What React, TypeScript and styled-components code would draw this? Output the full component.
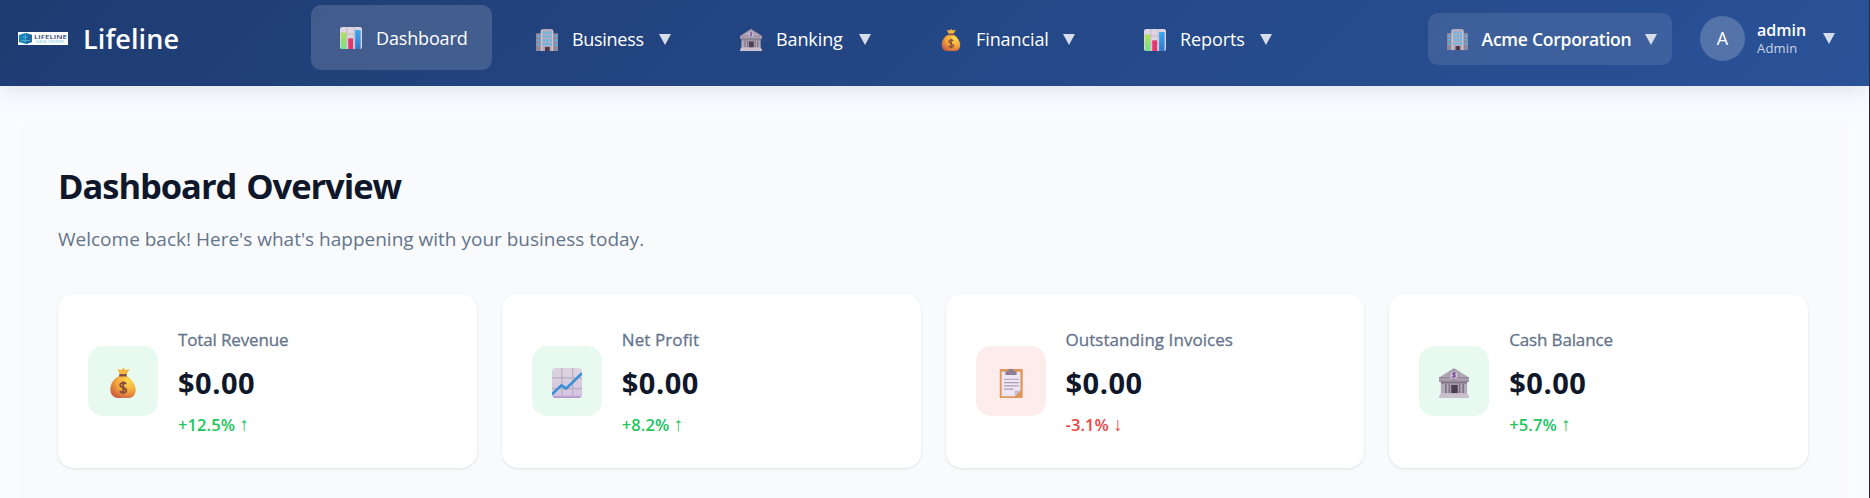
import React from "react";
import styled, { createGlobalStyle } from "styled-components";

const Global = createGlobalStyle`
  * { box-sizing: border-box; }
  body { margin: 0; background: #f8fbff; font-family: "Open Sans", "Noto Sans", sans-serif; overflow: hidden; }
`;

const Page = styled.div`
  height: 498px;
  border-right: 1px solid #2b2d33;
  display: flex;
  flex-direction: column;
  background: #f8fbff;
`;
const Header = styled.header`
  flex: none;
  height: 86px;
  padding: 0 34px 9px 18px;
  display: flex;
  align-items: center;
  color: #fff;
  background: linear-gradient(135deg, #1e3c72 0%, #2a5298 100%);
  box-shadow: 0 4px 20px rgba(0, 0, 0, 0.1);
  z-index: 1;
`;
const Brand = styled.div`
  width: 293px;
  display: flex;
  align-items: center;
  gap: 15px;
`;
const Text = styled.span<{ $size: number; $weight?: number; $track?: number }>`
  font-size: ${(p) => p.$size}px;
  font-weight: ${(p) => p.$weight ?? 400};
  letter-spacing: ${(p) => p.$track ?? 0}px;
  line-height: 1.36;
  white-space: nowrap;
`;
const BrandName = styled(Text)`
  padding-top: 2px;
`;
const Nav = styled.nav`
  display: flex;
  align-items: center;
  flex: 1;
`;
const NavItem = styled.div<{ $width: number; $active?: boolean }>`
  width: ${(p) => p.$width}px;
  height: 65px;
  padding-left: ${(p) => (p.$active ? 29 : 0)}px;
  padding-top: ${(p) => (p.$active ? 1 : 2)}px;
  border-radius: 10px;
  display: flex;
  align-items: center;
  background: ${(p) => (p.$active ? "rgba(255,255,255,0.15)" : "transparent")};
  margin-right: ${(p) => (p.$active ? 44 : 0)}px;
  margin-bottom: ${(p) => (p.$active ? 2 : 0)}px;
`;
const NavLabel = styled(Text)<{ $box: number }>`
  width: ${(p) => p.$box}px;
  margin-left: 14px;
`;
const Caret = styled.i`
  width: 12px;
  height: 11px;
  flex: none;
  background: #d5dcea;
  clip-path: polygon(0 0, 100% 0, 50% 100%);
`;
const Company = styled.div`
  width: 244px;
  height: 52px;
  padding: 2px 15px 0 19px;
  margin-right: 28px;
  border-radius: 10px;
  background: rgba(255, 255, 255, 0.1);
  display: flex;
  align-items: center;
  justify-content: space-between;
`;
const Avatar = styled.div`
  width: 45px;
  height: 45px;
  border-radius: 50%;
  background: rgba(255, 255, 255, 0.2);
  display: grid;
  place-items: center;
`;
const User = styled.div`
  width: 78px;
  padding-left: 12px;
  display: flex;
  flex-direction: column;
`;
const Role = styled(Text)`
  color: #cbd5e7;
  line-height: 16px;
`;
const UserName = styled(Text)`
  line-height: 19px;
`;
const Main = styled.main`
  flex: 1;
  margin: 40px 21px 0 18px;
  padding: 36px 40px 0;
  background: #f9fafc;
`;
const Title = styled.h1`
  margin: 0;
  font-size: 34.5px;
  line-height: 48px;
  font-weight: 700;
  letter-spacing: -1.05px;
  word-spacing: 2px;
  color: #0f172a;
`;
const Subtitle = styled.p`
  margin: 15px 0 0;
  font-size: 19px;
  line-height: 28px;
  color: #64748b;
`;
const Cards = styled.section`
  margin-top: 41px;
  display: grid;
  grid-template-columns: repeat(4, 1fr);
  gap: 25px;
`;
const Card = styled.article`
  height: 174px;
  padding-left: 30px;
  border-radius: 16px;
  background: #fff;
  box-shadow: 0 1px 3px rgba(0, 0, 0, 0.1);
  display: flex;
  align-items: center;
  gap: 20px;
`;
const Tile = styled.div<{ $down?: boolean }>`
  width: 70px;
  height: 70px;
  border-radius: 15px;
  background: ${(p) => (p.$down ? "#fdecec" : "#e8f9ef")};
  display: grid;
  place-items: center;
  padding-top: 3px;
`;
const Stat = styled.div`
  display: flex;
  flex-direction: column;
  padding-top: 2px;
`;
const StatLabel = styled(Text)`
  color: #64748b;
  line-height: 24px;
  -webkit-text-stroke: 0.3px #64748b;
`;
const Value = styled(Text)`
  color: #0f172a;
  line-height: 40px;
  margin: 11px 0 10px;
`;
const Change = styled(Text)<{ $down?: boolean }>`
  color: ${(p) => (p.$down ? "#ef4444" : "#22c55e")};
  line-height: 24px;
`;
const Arrow = styled.span`
  font-size: 19px;
  font-weight: 400;
  line-height: 1;
`;

type IconName = "chart" | "building" | "bank" | "bag" | "trend" | "clipboard";

const drawings: Record<IconName, React.ReactNode> = {
  chart: (
    <>
      <rect width="32" height="32" rx="3" fill="#ddd5e2" />
      <path d="M10 0v32M20.5 0v32M0 10h32M0 21h32" stroke="#bdb4c6" strokeWidth="1.2" />
      <path d="M1.5 8h7.5v24H3q-1.5 0-1.5-2z" fill="url(#barGreen)" />
      <path d="M12 16.5h7V32h-7z" fill="#e5336c" />
      <path d="M22 4.500h8V30q0 2-2 2h-6z" fill="url(#barBlue)" />
    </>
  ),
  building: (
    <>
      <path d="M1 6h7v26H0V7zM24 6h7l1 1v25h-8z" fill="#91869a" />
      <path d="M8 1l2-1h12l3 2v30H7V2z" fill="#b5aabb" />
      <path d="M7 2l2-2v32H7zM23 0l2 2v30h-2z" fill="#d0c3d1" />
      <path d="M10 4h3v3h-3zM15 4h3v3h-3zM20 4h3v3h-3zM10 9.500h3v3h-3zM15 9.500h3v3h-3zM20 9.500h3v3h-3zM10 15h3v3h-3zM15 15h3v3h-3zM20 15h3v3h-3zM10 20.500h3v3h-3zM15 20.500h3v3h-3zM20 20.500h3v3h-3zM2 9h3v3H2zM2 15h3v3H2zM2 21h3v3H2zM28 9h3v3h-3zM28 15h3v3h-3zM28 21h3v3h-3z" fill="#3ec4fa" />
      <path d="M13 26h7v6h-7z" fill="#503849" />
    </>
  ),
  bank: (
    <>
      <path d="M2 14h28v15H2z" fill="#b3a8b8" />
      <path d="M2 15h28v1.500H2z" fill="#7c7084" />
      <path d="M6.500 17h1.600v10H6.500zM10.200 17h1.600v10h-1.600zM21.200 17h1.600v10h-1.600zM25 17h1.600v10H25z" fill="#7b6f84" />
      <path d="M13 18h7v9h-7z" fill="#4c3f50" />
      <path d="M0 10L16 0l16 10v4H0z" fill="#b0a6b6" />
      <path d="M0 10.500h11M21 10.500h11M0 14h32" fill="none" stroke="#8c8194" strokeWidth="1.200" />
      <path d="M2 27h28l2 3v2H0v-2z" fill="#cbc0cd" />
      <circle cx="16" cy="7.500" r="5" fill="#c8bccd" stroke="#958a9d" />
      <path d="M18 5.500q-4-1-3 1.500L17 8q1 2-3 1.500M16 4v7" fill="none" stroke="#7b4fa2" strokeWidth="1.300" />
    </>
  ),
  bag: (
    <>
      <path d="M10 1l4 1 2-2 3 2 4-1-4 7h-6z" fill="#f7b73c" />
      <path d="M13 8C7 10 2 17 2.500 23.500 3 29 6 31.500 10 32h12c5 0 7.500-4 7.500-9C29 17 24 10 19 8z" fill="url(#gold)" />
      <path d="M12 6.500h8V9h-8z" fill="#7c4a45" />
      <path d="M19.500 17c-2-2-6.500-1.500-6.500 1.500 0 3 6.500 2 6.500 5.500 0 3-5 3-7 .8M16.300 14v14" fill="none" stroke="#874c3b" strokeWidth="2" />
    </>
  ),
  trend: (
    <>
      <rect width="32" height="32" rx="4" fill="url(#paper)" />
      <path d="M10.500 0v32M22 0v32M0 10.500h32M0 22h32" stroke="#b8afc0" strokeWidth="1.300" />
      <path d="M0 28l10-9.500 5 3.500L32 5.500" fill="none" stroke="#378fd6" strokeWidth="2.800" strokeLinejoin="round" />
    </>
  ),
  clipboard: (
    <>
      <rect x="4" y="1" width="24.500" height="31" rx="1" fill="#df975b" />
      <path d="M6 4h20v20l-6 6H6z" fill="#eee5f5" />
      <path d="M20 30v-6h6z" fill="#c9bfd4" />
      <path d="M10 7.500V4l3-1c1-3 5-3 6 0l3 1v3.500z" fill="#8d7f91" />
      <path d="M8.500 12h16M8.500 15.500h16M8.500 19h16M8.500 22.500h10" stroke="#aaa0b5" strokeWidth="1.300" />
    </>
  ),
};

const IconSvg = styled.svg`
  flex: none;
  display: block;
`;
const Icon = ({ name, size }: { name: IconName; size: number }) => (
  <IconSvg width={size} height={size} viewBox="0 0 32 32">
    {drawings[name]}
  </IconSvg>
);

const Defs = styled.svg`
  position: absolute;
`;
const Gradients = () => (
  <Defs width="0" height="0">
    <defs>
      <linearGradient id="barGreen" x1="0" y1="0" x2="0" y2="1"><stop stopColor="#b4df55" /><stop offset="1" stopColor="#70e28b" /></linearGradient>
      <linearGradient id="barBlue" x1="0" y1="0" x2="0" y2="1"><stop stopColor="#38a9f5" /><stop offset="1" stopColor="#3278c6" /></linearGradient>
      <linearGradient id="paper" x1="0" y1="0" x2="0" y2="1"><stop stopColor="#dbd4df" /><stop offset=".9" stopColor="#d5c5e2" /><stop offset="1" stopColor="#ae88c8" /></linearGradient>
      <radialGradient id="gold" cx=".7" cy=".25" r=".8"><stop stopColor="#ffdc50" /><stop offset=".6" stopColor="#f4a23b" /><stop offset="1" stopColor="#cc653e" /></radialGradient>
    </defs>
  </Defs>
);

const Logo = () => (
  <svg width="50" height="13" viewBox="0 0 50 13">
    <rect width="50" height="13" fill="#fff" />
    <path d="M1 3l6-2 7 2v7l-6 2-7-2z" fill="#1786bd" />
    <path d="M8 1l6 2v7l-6 2z" fill="#1b6ba5" />
    <path d="M3 8.500h9M5 5h5M7.500 2v8" stroke="#62bce0" strokeWidth=".7" />
    <text x="16" y="7.400" fontSize="5.800" fontWeight="600" textLength="33" lengthAdjust="spacingAndGlyphs" fill="#1f4478">LIFELINE</text>
    <text x="18" y="11.300" fontSize="3" textLength="28" lengthAdjust="spacingAndGlyphs" fill="#6fc3de">DATA CENTERS</text>
  </svg>
);

const menus: { label: string; icon: IconName; width: number; box: number; track: number }[] = [
  { label: "Business", icon: "building", width: 204, box: 87, track: -0.3 },
  { label: "Banking", icon: "bank", width: 200, box: 83, track: -0.1 },
  { label: "Financial", icon: "bag", width: 204, box: 87, track: -0.1 },
  { label: "Reports", icon: "chart", width: 160, box: 80, track: -0.1 },
];
const stats: { label: string; icon: IconName; change: string; track: number; down?: boolean }[] = [
  { label: "Total Revenue", icon: "bag", change: "+12.5%", track: -0.15 },
  { label: "Net Profit", icon: "trend", change: "+8.2%", track: 0.1 },
  { label: "Outstanding Invoices", icon: "clipboard", change: "-3.1%", track: 0.05, down: true },
  { label: "Cash Balance", icon: "bank", change: "+5.7%", track: -0.15 },
];

export default function App() {
  return (
    <Page>
      <Global />
      <Gradients />
      <Header>
        <Brand>
          <Logo />
          <BrandName $size={27} $weight={600} $track={0.1}>Lifeline</BrandName>
        </Brand>
        <Nav>
          <NavItem $width={181} $active>
            <Icon name="chart" size={22} />
            <NavLabel $size={18} $box={100} $track={-0.15}>Dashboard</NavLabel>
          </NavItem>
          {menus.map((m) => (
            <NavItem key={m.label} $width={m.width}>
              <Icon name={m.icon} size={22} />
              <NavLabel $size={18} $box={m.box} $track={m.track}>{m.label}</NavLabel>
              <Caret />
            </NavItem>
          ))}
        </Nav>
        <Company>
          <Icon name="building" size={21} />
          <Text $size={17.5} $weight={600} $track={-0.25}>Acme Corporation</Text>
          <Caret />
        </Company>
        <Avatar><Text $size={18}>A</Text></Avatar>
        <User>
          <UserName $size={16} $weight={600}>admin</UserName>
          <Role $size={13} $track={0.2}>Admin</Role>
        </User>
        <Caret />
      </Header>
      <Main>
        <Title>Dashboard Overview</Title>
        <Subtitle>Welcome back! Here's what's happening with your business today.</Subtitle>
        <Cards>
          {stats.map((s) => (
            <Card key={s.label}>
              <Tile $down={s.down}><Icon name={s.icon} size={30} /></Tile>
              <Stat>
                <StatLabel $size={17} $track={s.track}>{s.label}</StatLabel>
                <Value $size={29} $weight={700} $track={0.5}>$0.00</Value>
                <Change $size={16.5} $weight={600} $track={0.1} $down={s.down}>
                  {s.change} <Arrow>{s.down ? "↓" : "↑"}</Arrow>
                </Change>
              </Stat>
            </Card>
          ))}
        </Cards>
      </Main>
    </Page>
  );
}
